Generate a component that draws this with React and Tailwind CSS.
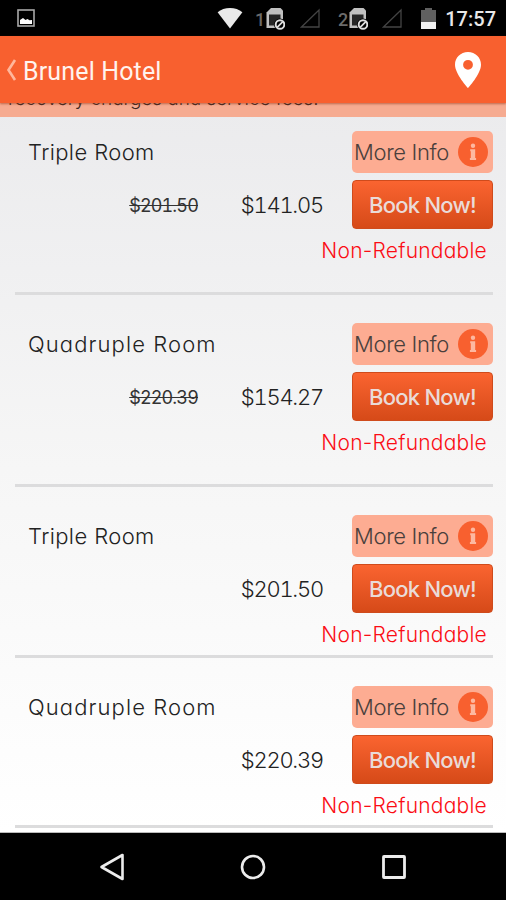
import { clsx } from 'clsx';

const ROOMS = [
  { id: 1, name: 'Triple Room', was: '$201.50', price: '$141.05', size: 'h-[178px] pt-[14px]', tracking: 'tracking-[0.400px]' },
  { id: 2, name: 'Quadruple Room', was: '$220.39', price: '$154.27', size: 'h-[192px] pt-[28px]', tracking: 'tracking-[1.100px]' },
  { id: 3, name: 'Triple Room', price: '$201.50', size: 'h-[171px] pt-[28px]', tracking: 'tracking-[0.400px]' },
  { id: 4, name: 'Quadruple Room', price: '$220.39', size: 'h-[170px] pt-[28px]', tracking: 'tracking-[1.100px]' },
];

function SimIcon({ slot }) {
  return (
    <svg className="w-[30px] h-[24px]" viewBox="0 0 30 24">
      <text x="0" y="20" fontSize="18" fontWeight="500" fontFamily="Roboto, sans-serif" fill="#6b6b6b">{slot}</text>
      <path d="M16 2h9.500L28 4.500V22H11.500V6.500z" fill="#c0c0c0" />
      <path d="M14 8.500h11.500v11H14z" fill="#262626" />
      <circle cx="25" cy="18.500" r="6" fill="#000" />
      <circle cx="25" cy="18.500" r="4.300" fill="none" stroke="#e0e0e0" strokeWidth="1.900" />
      <path d="M22.200 21.300l5.600-5.600" stroke="#e0e0e0" strokeWidth="1.700" />
    </svg>
  );
}

function NoSignal() {
  return (
    <svg className="w-[20px] h-[20px]" viewBox="0 0 20 20">
      <path d="M1.500 19L19 2v17z" fill="none" stroke="#444" strokeWidth="1.300" />
    </svg>
  );
}

function StatusBar() {
  return (
    <div className="h-[36px] bg-black flex items-center pl-[17px] pr-[10px] font-[Roboto,sans-serif]">
      <svg className="w-[18px] h-[18px]" viewBox="0 0 18 18">
        <rect x="1" y="1" width="16" height="16" fill="none" stroke="#a8a8a8" strokeWidth="1.600" />
        <path d="M3 15v-4l3-2 2.500 2 2-1 2 1.200L15 11v4z" fill="#fff" />
      </svg>
      <svg className="ml-[182px] w-[26px] h-[22px]" viewBox="0 0 26 22">
        <path d="M13 21.500L.6 5.200C7-.5 19-.5 25.400 5.200z" fill="#e9e9e9" />
      </svg>
      <div className="ml-[12px] flex items-center">
        <SimIcon slot="1" />
        <div className="ml-[15px] flex"><NoSignal /></div>
      </div>
      <div className="ml-[18px] flex items-center">
        <SimIcon slot="2" />
        <div className="ml-[14px] flex"><NoSignal /></div>
      </div>
      <svg className="ml-[19px] w-[15px] h-[21px]" viewBox="0 0 15 21">
        <path d="M4 0h7v2h4v12H0V2h4z" fill="#606060" />
        <path d="M0 14h15v7H0z" fill="#f2f2f2" />
      </svg>
      <span className="ml-auto mt-[2px] text-[20px] leading-none font-medium text-[#e8e8e8] whitespace-nowrap">17:57</span>
    </div>
  );
}

function AppBar() {
  return (
    <header className="relative z-10 h-[67px] bg-[#f8602f] shadow-[0_1px_2px_rgba(150,60,30,0.6)] flex items-center pl-[6px] pr-[24px]">
      <svg className="w-[11px] h-[22px]" viewBox="0 0 11 22">
        <path d="M9 1L2.500 11 9 21" fill="none" stroke="#ffb79c" strokeWidth="2.600" />
      </svg>
      <h1 className="ml-[6px] mt-[3px] text-[25px] tracking-[0.150px] leading-none text-[#fff3ee] whitespace-nowrap font-[Roboto,sans-serif]">Brunel Hotel</h1>
      <svg className="ml-auto w-[28px] h-[38px]" viewBox="0 0 28 38">
        <path
          d="M14 1C6.600 1 1 6.600 1 13.700 1 23 14 37 14 37s13-14 13-23.300C27 6.600 21.400 1 14 1zm0 17.700a4.900 4.900 0 1 1 0-9.800 4.900 4.900 0 0 1 0 9.800z"
          fill="#fff"
        />
      </svg>
    </header>
  );
}

function RoomRow({ room }) {
  return (
    <li className={clsx('ml-[15px] mr-[13px] flex flex-col border-b-[3px] border-[#dcdcdd]', room.size)}>
      <div className="flex h-[42px] items-center">
        <h2 className={clsx('flex-1 pt-px pl-[13px] text-[22px] text-[#222] whitespace-nowrap', room.tracking)}>{room.name}</h2>
        <button className="w-[141px] h-[42px] rounded-[5px] bg-[#fdac92] flex items-center pl-[2px] pr-[5px]">
          <span className="pt-px text-[22px] tracking-[-0.350px] text-[#4a3f3c] whitespace-nowrap">More Info</span>
          <svg className="ml-auto w-[30px] h-[30px]" viewBox="0 0 30 30">
            <circle cx="15" cy="15" r="15" fill="#f8602f" />
            <circle cx="15" cy="8.800" r="2.200" fill="#fdb8a0" />
            <path d="M12.800 12.300h4.400v8.700h.9v2h-6.200v-2h.9v-6.800h-.6v-1.900z" fill="#fdb8a0" />
          </svg>
        </button>
      </div>
      <div className="mt-[7px] flex h-[49px] items-center tabular-nums">
        <span className="w-[183px] pt-[2px] text-right text-[18px] tracking-[-0.850px] font-normal text-[#333] line-through whitespace-nowrap">{room.was}</span>
        <span className="flex-1 pt-[2px] pr-[29px] text-right text-[22px] tracking-[-1.250px] text-[#222] whitespace-nowrap">{room.price}</span>
        <button className="w-[141px] h-[49px] rounded-[4px] border border-[#cf4b1c] bg-linear-to-b from-[#fa6430] to-[#d64a18] pt-[2px] text-[22px] tracking-[-0.750px] font-medium text-[#eadbd8] whitespace-nowrap">
          Book Now!
        </button>
      </div>
      <p className="mt-[8px] pr-[6px] text-right text-[21px] leading-[28px] tracking-[0.230px] text-[#fb0d14] whitespace-nowrap">Non-Refundable</p>
    </li>
  );
}

function NavBar() {
  return (
    <nav className="h-[67px] bg-black flex items-center justify-center gap-[115px]">
      <svg className="w-[26px] h-[28px]" viewBox="0 0 26 28">
        <path d="M23.500 2v24L2.500 14z" fill="none" stroke="#ececec" strokeWidth="2.600" strokeLinejoin="round" />
      </svg>
      <svg className="w-[26px] h-[26px]" viewBox="0 0 26 26">
        <circle cx="13" cy="13" r="11" fill="none" stroke="#ececec" strokeWidth="2.600" />
      </svg>
      <svg className="w-[26px] h-[26px]" viewBox="0 0 26 26">
        <rect x="2.500" y="2.500" width="21" height="21" rx="0.500" fill="none" stroke="#ececec" strokeWidth="2.800" />
      </svg>
    </nav>
  );
}

export default function App() {
  return (
    <div className="w-[506px] h-[900px] overflow-hidden flex flex-col bg-black">
      <StatusBar />
      <AppBar />
      <main className="flex-1 min-h-0 overflow-hidden bg-linear-to-b from-[#ebebed] via-[#f6f6f6] to-white border-b border-[#bbb] font-[Inter,sans-serif] font-light [font-feature-settings:'cv11','ss03']">
        {/* Tail of the fees notice, scrolled under the app bar */}
        <div className="h-[14px] overflow-hidden bg-[#f6ab91] pl-[8px]">
          <p className="mt-[-16px] text-[19px] leading-[24px] tracking-[-0.080px] text-[#3a2620] whitespace-nowrap">recovery charges and service fees.</p>
        </div>
        <ul>
          {ROOMS.map((room) => <RoomRow key={room.id} room={room} />)}
        </ul>
      </main>
      <NavBar />
    </div>
  );
}
